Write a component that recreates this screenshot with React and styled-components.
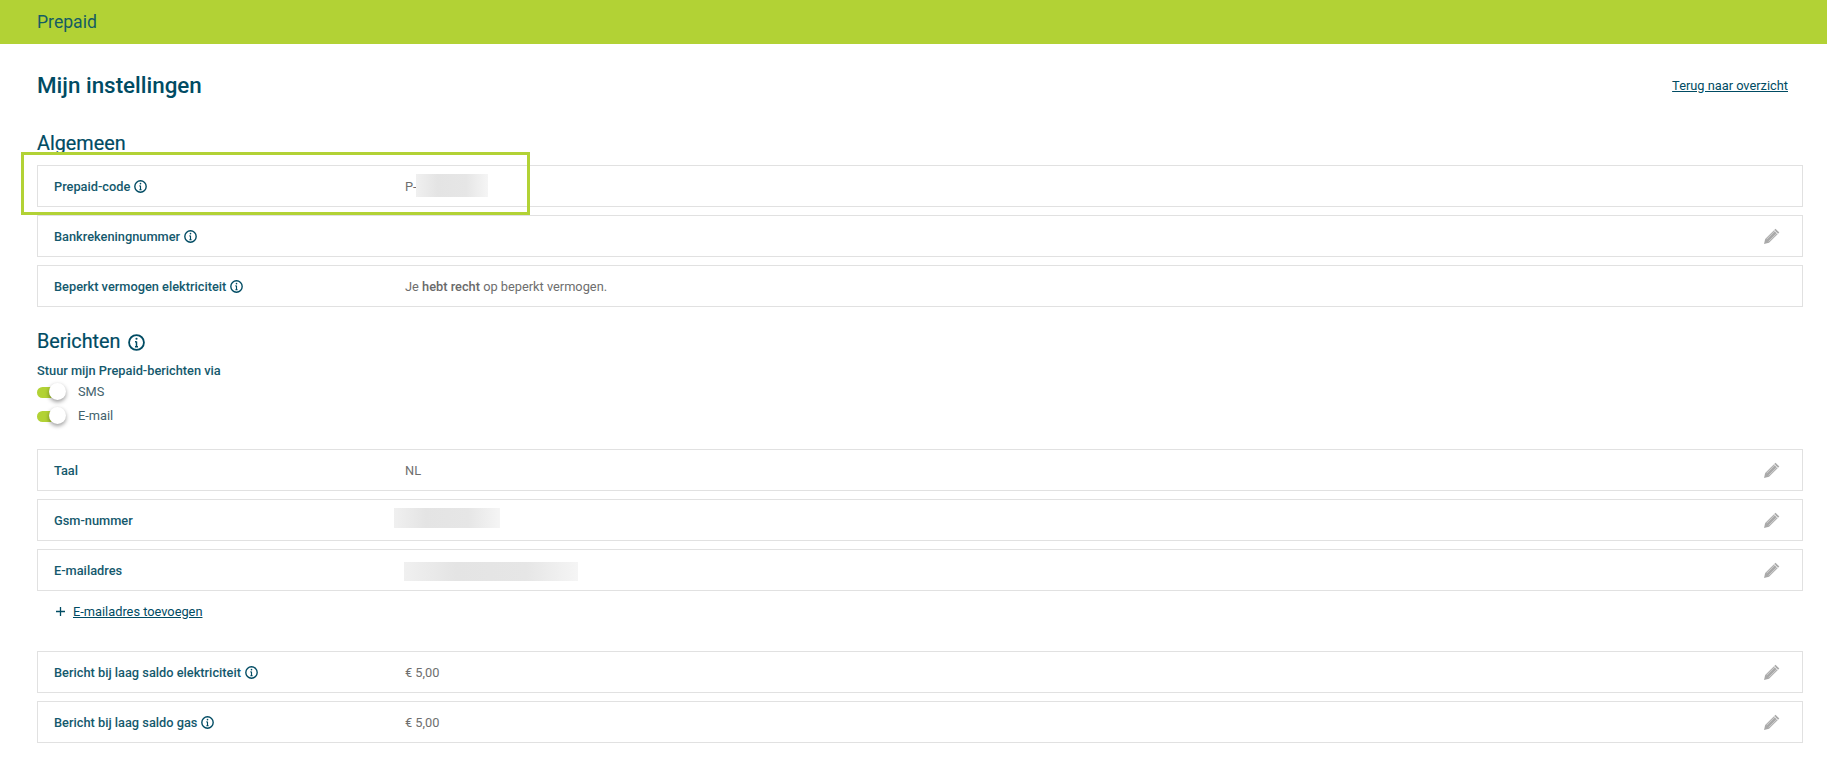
import styled, { createGlobalStyle } from 'styled-components';

const GlobalStyle = createGlobalStyle`
  html, body {
    margin: 0;
    background: #fff;
    font-family: Roboto, "Liberation Sans", sans-serif;
    color: #004b63;
  }
`;

const Header = styled.header`
  height: 44px;
  background: #b2d235;
  display: flex;
  align-items: center;
  padding-left: 37px;
  font-size: 17.6px;
  color: #155c63;
`;

const Main = styled.main`
  position: relative;
  padding: 27px 24px 0 37px;
`;

const TitleBar = styled.div`
  display: flex;
  justify-content: space-between;
  align-items: center;
  height: 28px;
  padding-right: 15px;
`;

const Title = styled.h1`
  margin: 0;
  font-size: 22.4px;
  font-weight: 500;
  line-height: 28px;
`;

const BackLink = styled.a`
  font-size: 12.8px;
  color: #004b63;
  text-decoration: underline;
`;

const SectionTitle = styled.h2`
  display: flex;
  align-items: center;
  gap: 8px;
  margin: ${p => p.$top}px 0 0;
  height: 24px;
  font-size: 19.8px;
  font-weight: 400;
  line-height: 24px;
  -webkit-text-stroke: 0.2px #004b63;
`;

const List = styled.div`
  display: flex;
  flex-direction: column;
  gap: 8px;
  margin-top: ${p => p.$top}px;
`;

const Row = styled.div`
  display: flex;
  align-items: center;
  box-sizing: border-box;
  height: 42px;
  border: 1.5px solid #e1e1e1;
  padding: 0 21px 0 16px;
  font-size: 12.8px;
`;

const Label = styled.div`
  display: flex;
  align-items: center;
  gap: 4px;
  width: 351px;
  font-weight: 500;
  color: #14596d;
`;

const Value = styled.div`
  flex: 1;
  display: flex;
  align-items: center;
  color: #6e6e6e;
`;

const Strong = styled.span`
  color: #6a6a6a;
  font-weight: 500;
`;

const Redacted = styled.span`
  display: inline-block;
  width: ${p => p.$width}px;
  height: ${p => p.$height}px;
  margin-left: ${p => p.$shift}px;
  transform: translateY(${p => p.$lift}px);
  background: linear-gradient(90deg, #f0f0f0, #e4e4e4 30%, #e6e6e6 70%, #f5f5f5);
`;

const Highlight = styled.div`
  position: absolute;
  left: 21px;
  top: 108px;
  width: 503px;
  height: 57px;
  border: 3px solid #b2d235;
  pointer-events: none;
`;

const Prompt = styled.div`
  margin-top: 9px;
  font-size: 12.8px;
  font-weight: 500;
  line-height: 16px;
  color: #14596d;
`;

const ToggleList = styled.div`
  display: flex;
  flex-direction: column;
  gap: 4px;
  margin-top: 2px;
`;

const ToggleRow = styled.div`
  display: flex;
  align-items: center;
  gap: 14px;
  height: 20px;
  font-size: 12.8px;
  color: #43626c;
`;

const Toggle = styled.span`
  position: relative;
  display: inline-block;
  width: 27px;
  height: 11px;
  margin-top: 3px;
  border-radius: 6px;
  background: #b2d235;

  &::after {
    content: '';
    position: absolute;
    right: -2px;
    top: -4px;
    width: 17px;
    height: 17px;
    border-radius: 50%;
    background: #fff;
    box-shadow: 0 2px 4px rgba(0, 0, 0, 0.4);
  }
`;

const AddLink = styled.div`
  display: flex;
  align-items: center;
  gap: 7px;
  margin: 12px 0 0 18px;
  height: 16px;
  font-size: 12.8px;

  a {
    color: #004b63;
    text-decoration: underline;
  }
`;

const InfoIcon = ({ size = 13 }) => (
  <svg width={size} height={size} viewBox="0 0 16 16" fill="none" stroke="#004b63" strokeWidth="1.7">
    <circle cx="8" cy="8" r="7" />
    <path d="M8 7v5M6.6 7.2H8M6.6 12h2.8" strokeWidth="1.4" />
    <circle cx="8" cy="4.5" r="1" fill="#004b63" stroke="none" />
  </svg>
);

const PencilIcon = () => (
  <svg width="18" height="18" viewBox="0 0 18 18">
    <path d="M1 17l1.2-5L12.5 1.8l3.8 3.8L6 15.8z" fill="#a9a9a9" />
    <path d="M3.6 12.2l8.6-8.6M5.8 14.4l8.6-8.6" stroke="#d6d6d6" strokeWidth="0.9" />
    <path d="M11 3.2l3.8 3.8" stroke="#fff" strokeWidth="0.8" />
  </svg>
);

const PlusIcon = () => (
  <svg width="11" height="11" viewBox="0 0 11 11" stroke="#004b63" strokeWidth="1.3">
    <path d="M5.5 1v9M1 5.5h9" />
  </svg>
);

const SettingRow = ({ label, info, edit, children }) => (
  <Row>
    <Label>
      {label}
      {info && <InfoIcon />}
    </Label>
    <Value>{children}</Value>
    {edit && <PencilIcon />}
  </Row>
);

export default function App() {
  return (
    <>
      <GlobalStyle />
      <Header>Prepaid</Header>
      <Main>
        <TitleBar>
          <Title>Mijn instellingen</Title>
          <BackLink>Terug naar overzicht</BackLink>
        </TitleBar>

        <SectionTitle $top={33}>Algemeen</SectionTitle>
        <List $top={9}>
          <SettingRow label="Prepaid-code" info>
            P-
            <Redacted $width={72} $height={23} $shift={-1} $lift={-1} />
          </SettingRow>
          <SettingRow label="Bankrekeningnummer" info edit />
          <SettingRow label="Beperkt vermogen elektriciteit" info>
            <span>
              Je <Strong>hebt recht</Strong> op beperkt vermogen.
            </span>
          </SettingRow>
        </List>

        <SectionTitle $top={23}>
          Berichten
          <InfoIcon size={17} />
        </SectionTitle>
        <Prompt>Stuur mijn Prepaid-berichten via</Prompt>
        <ToggleList>
          <ToggleRow><Toggle />SMS</ToggleRow>
          <ToggleRow><Toggle />E-mail</ToggleRow>
        </ToggleList>

        <List $top={24}>
          <SettingRow label="Taal" edit>NL</SettingRow>
          <SettingRow label="Gsm-nummer" edit>
            <Redacted $width={106} $height={20} $shift={-11} $lift={-2} />
          </SettingRow>
          <SettingRow label="E-mailadres" edit>
            <Redacted $width={174} $height={19} $shift={-1} $lift={1} />
          </SettingRow>
        </List>
        <AddLink>
          <PlusIcon />
          <a>E-mailadres toevoegen</a>
        </AddLink>

        <List $top={32}>
          <SettingRow label="Bericht bij laag saldo elektriciteit" info edit>€ 5,00</SettingRow>
          <SettingRow label="Bericht bij laag saldo gas" info edit>€ 5,00</SettingRow>
        </List>

        <Highlight />
      </Main>
    </>
  );
}
